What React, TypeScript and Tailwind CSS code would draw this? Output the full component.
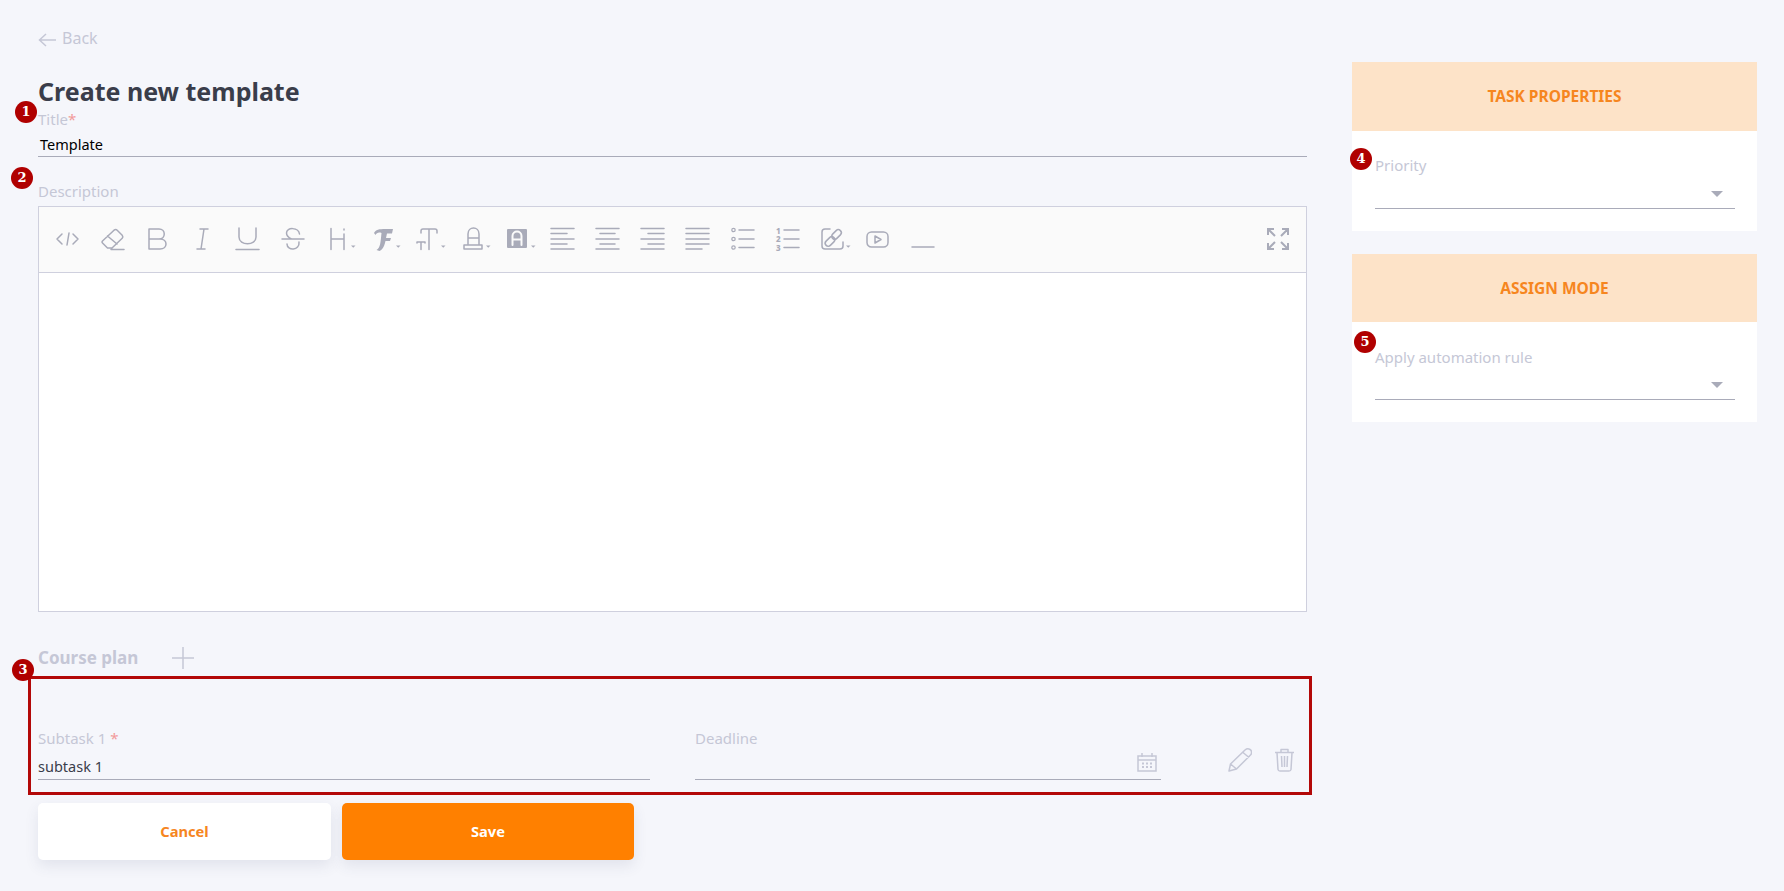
const ICON = "#a9abb9";

// every toolbar glyph sits in a 32x24 box, the row repeats every 45px
function Glyph({ children }: { children: React.ReactNode }) {
  return (
    <div className="w-[45px] h-6 shrink-0">
      <svg width="32" height="24" viewBox="0 0 32 24" fill="none" stroke={ICON} strokeWidth="1.5" strokeLinecap="round" strokeLinejoin="round" className="overflow-visible">
        {children}
      </svg>
    </div>
  );
}

const Caret = ({ x = 25 }: { x?: number }) => <path d={`M${x} 18.500h4.500l-2.250 2.200z`} fill={ICON} stroke="none" />;

function Toolbar() {
  return (
    <div className="h-[66px] bg-[#fafafa] border-b border-[#cfd0de] flex items-center pl-[17px] pr-[16px] pb-[2px]">
      <Glyph><path d="M6 7 1 12l5 5M13 6l-2 12M17 7l5 5-5 5" /></Glyph>
      <Glyph><path d="M1.500 14 13 3.200q1.800-1.400 3.200 0l5 5q1.200 1.600 0 3L11 21H6.500l-5-5q-1-1 0-2ZM6.500 9l9.500 8M10 22.500h13" /></Glyph>
      <Glyph><path d="M3 2v20h11c8 0 8-10 0-10H3m0-10h10c7 0 7 10 0 10" /></Glyph>
      <Glyph><path d="M9 2h8M13 2l-3 20M6 22h8" /></Glyph>
      <Glyph><path d="M3 1v9c0 9 17 9 17 0V1M0 22.500h23" /></Glyph>
      <Glyph><path d="M1 12h22M18.500 7c-1-7-13-7-13-1 0 2 1 4 5 6M18 15c1 9-12 9-12 2" /></Glyph>
      <Glyph><path d="M5 1.500v21M5 12h13M18 2v1M18 7v15.500" /><Caret /></Glyph>
      <Glyph>
        <path d="M3 6c2-5 9-4 19-4l-1 4.500h-5l-1 4.500h5l-1 3h-4.500c-1 4-2 8-6 10l-3-1c4-2 4-8 5-17-3-1-5 0-6 2Z" fill={ICON} stroke="none" />
        <Caret />
      </Glyph>
      <Glyph><path d="M5 6V4q0-2 2-2h12q2 0 2 2v2M13 2v20.500M1 16v-1h8v1M5 15v7.500" /><Caret /></Glyph>
      <Glyph><path d="M7 17V7c0-8 11-8 11 0v10M7 11h11M3 18h18v4H3z" /><Caret /></Glyph>
      <Glyph>
        <rect x="1" y="2" width="20" height="19" rx="1" fill={ICON} stroke="none" />
        <path d="M6.500 18V9c0-6 9-6 9 0v9M6.500 12.500h9" stroke="#fafafa" strokeWidth="2" />
        <Caret />
      </Glyph>
      <Glyph><path d="M0 1.500h23M0 6.500h16M0 12h23M0 17h16M0 22h23" /></Glyph>
      <Glyph><path d="M0 1.500h23M4 6.500h15M0 12h23M4 17h15M0 22h23" /></Glyph>
      <Glyph><path d="M0 1.500h23M7 6.500h16M0 12h23M7 17h16M0 22h23" /></Glyph>
      <Glyph><path d="M0 1.500h23M0 6.500h23M0 12h23M0 17h23M0 22h16" /></Glyph>
      <Glyph>
        <circle cx="2.500" cy="3" r="1.700" strokeWidth="1.200" /><circle cx="2.500" cy="12" r="1.700" strokeWidth="1.200" /><circle cx="2.500" cy="20.500" r="1.700" strokeWidth="1.200" />
        <path d="M8 3h15M8 12h15M8 20.500h15" />
      </Glyph>
      <Glyph>
        <text x="0" y="6.500" fontSize="8" fontWeight="800" fill={ICON} stroke="none" fontFamily="'Noto Sans', sans-serif">1</text>
        <text x="0" y="15" fontSize="8" fontWeight="800" fill={ICON} stroke="none" fontFamily="'Noto Sans', sans-serif">2</text>
        <text x="0" y="23.500" fontSize="8" fontWeight="800" fill={ICON} stroke="none" fontFamily="'Noto Sans', sans-serif">3</text>
        <path d="M8 3h15M8 12h15M8 20.500h15" />
      </Glyph>
      <Glyph>
        <path d="M9 2H4Q1 2 1 5v14q0 3 3 3h15q3 0 3-3v-4" />
        <rect x="3.500" y="11.500" width="11" height="6" rx="3" transform="rotate(-45 9 14.500)" />
        <rect x="10" y="4.500" width="11" height="6" rx="3" transform="rotate(-45 15.500 7.500)" />
        <Caret />
      </Glyph>
      <Glyph><rect x="1" y="5" width="21" height="15" rx="4.500" /><path d="m9 9 6 3.500-6 3.500z" /></Glyph>
      <Glyph><path d="M1 20h22" /></Glyph>
      <div className="ml-auto">
        <svg width="24" height="24" viewBox="0 0 24 24" fill="none" stroke={ICON} strokeWidth="2">
          <path d="M2 8V2h6M2 2l7 7M16 2h6v6M22 2l-7 7M2 16v6h6M2 22l7-7M22 16v6h-6M22 22l-7-7" />
        </svg>
      </div>
    </div>
  );
}

function Badge({ n, className }: { n: number; className: string }) {
  return (
    <span className={`absolute w-[22px] h-[22px] rounded-full bg-[#b00000] text-white text-[13px] font-bold flex items-center justify-center font-['DejaVu_Serif',serif] ${className}`}>
      {n}
    </span>
  );
}

function SideCard({ title, label, headerClass, bodyClass, lineClass }: { title: string; label: string; headerClass: string; bodyClass: string; lineClass: string }) {
  return (
    <div className="bg-white">
      <div className={`bg-[#fde3c8] flex items-center justify-center text-[15.500px] font-bold text-[#f6861f] ${headerClass}`}>{title}</div>
      <div className={`pl-[23px] pr-[22px] h-[100px] ${bodyClass}`}>
        <div className="h-5 leading-5 text-[15px] text-[#c5c7d6]">{label}</div>
        <div className={`h-[20px] border-b-[1.5px] border-[#a9abb9] flex justify-end pr-[12px] ${lineClass}`}>
          <svg width="12" height="6" viewBox="0 0 12 6" className="mt-[2px]"><path d="M0 0h12L6 6z" fill={ICON} /></svg>
        </div>
      </div>
    </div>
  );
}

export default function App() {
  return (
    <div className="relative min-h-[891px] bg-[#f5f6fb] flex pl-[38px] font-['Noto_Sans',sans-serif] overflow-hidden">
      <div className="w-[1269px] shrink-0">
        <div className="mt-[28px] h-5 flex items-center gap-[6px] text-[16px] text-[#c5c7d6]">
          <svg width="18" height="14" viewBox="0 0 18 14" fill="none" stroke="#c5c7d6" strokeWidth="1.500" className="mt-[3px]">
            <path d="M8 1 1.500 7 8 13M1.500 7H18" />
          </svg>
          Back
        </div>

        <h1 className="mt-[28px] h-[30px] leading-[30px] text-[25px] font-bold text-[#3a3d4a]">Create new template</h1>

        <div className="mt-[4px] h-[18px] leading-[18px] text-[15px] text-[#c5c7d6]">
          Title<span className="text-[#f29a9a]">*</span>
        </div>
        <div className="h-[29px] leading-[32px] pl-[2px] text-[14.500px] text-black border-b border-[#a9abb9]">Template</div>

        <div className="mt-[25px] h-[18px] leading-[18px] text-[15px] text-[#c5c7d6]">Description</div>
        <div className="mt-[6px] h-[406px] bg-white border border-[#cfd0de]">
          <Toolbar />
        </div>

        <div className="mt-[34px] h-6 flex items-center text-[17px] font-bold text-[#c5c7d6]">
          Course plan
          <svg width="24" height="24" viewBox="0 0 24 24" stroke="#c5c7d6" strokeWidth="1.500" className="ml-[33px]">
            <path d="M12 1v22M1 12h22" />
          </svg>
        </div>

        <div className="mt-[6px] -ml-[10px] w-[1284px] h-[119px] border-[3px] border-[#b30808] pl-[7px] pb-[12px] flex items-end">
          <div className="w-[612px]">
            <div className="h-5 leading-5 text-[15px] text-[#c5c7d6]">Subtask 1 <span className="text-[#f29a9a]">*</span></div>
            <div className="mt-[9px] h-[23px] leading-[18px] text-[14.500px] text-[#3a3d4a] border-b border-[#a9abb9]">subtask 1</div>
          </div>
          <div className="ml-[45px] w-[466px]">
            <div className="h-5 leading-5 text-[15px] text-[#c5c7d6]">Deadline</div>
            <div className="mt-[9px] h-[23px] border-b border-[#a9abb9] flex justify-end pr-[4px]">
              <svg width="20" height="19" viewBox="0 0 20 19" fill="none" stroke="#c5c7d6" strokeWidth="1.500" className="-mt-[4px]">
                <path d="M1 3h18v15H1zM1 7h18M5 0v4M15 0v4" />
                <path d="M5 10.500h2M9 10.500h2M13 10.500h2M5 14h2M9 14h2M13 14h2" strokeWidth="1.800" />
              </svg>
            </div>
          </div>
          <svg width="24" height="24" viewBox="0 0 24 24" fill="none" stroke="#c5c7d6" strokeWidth="1.500" strokeLinejoin="round" className="ml-[67px] mb-[8px]">
            <path d="M1 23 2.500 16 17 2q2.500-2 5-.5t1 5L8.500 21ZM2.500 16 8.500 21M15 4.500l6 5" />
          </svg>
          <svg width="21" height="24" viewBox="0 0 21 24" fill="none" stroke="#c5c7d6" strokeWidth="1.500" strokeLinejoin="round" className="ml-[22px] mb-[8px]">
            <path d="M1 4.500h19M7 4.500V1.500h7v3M3 4.500l1 17q.2 1.500 2 1.500h9q1.800 0 2-1.500l1-17M7.500 8l.5 11M10.500 8v11M13.500 8 13 19" />
          </svg>
        </div>

        <div className="mt-[8px] flex gap-[11px]">
          <button className="w-[293px] h-[57px] rounded-[5px] bg-white text-[14.700px] font-bold text-[#f6861f] shadow-[0_6px_14px_rgba(60,70,110,0.1)]">Cancel</button>
          <button className="w-[292px] h-[57px] rounded-[5px] bg-[#ff8000] text-[14.700px] font-bold text-white shadow-[0_6px_14px_rgba(60,70,110,0.1)]">Save</button>
        </div>
      </div>

      <div className="ml-[45px] mt-[62px] w-[405px] shrink-0 flex flex-col gap-[23px]">
        <SideCard title="TASK PROPERTIES" label="Priority" headerClass="h-[69px]" bodyClass="pt-[24px]" lineClass="mt-[14px]" />
        <SideCard title="ASSIGN MODE" label="Apply automation rule" headerClass="h-[68px] pt-[1px]" bodyClass="pt-[25px]" lineClass="mt-[13px]" />
      </div>

      <Badge n={1} className="left-[15px] top-[101px]" />
      <Badge n={2} className="left-[11px] top-[167px]" />
      <Badge n={3} className="left-[12px] top-[659px]" />
      <Badge n={4} className="left-[1350px] top-[148px]" />
      <Badge n={5} className="left-[1354px] top-[331px]" />
    </div>
  );
}
